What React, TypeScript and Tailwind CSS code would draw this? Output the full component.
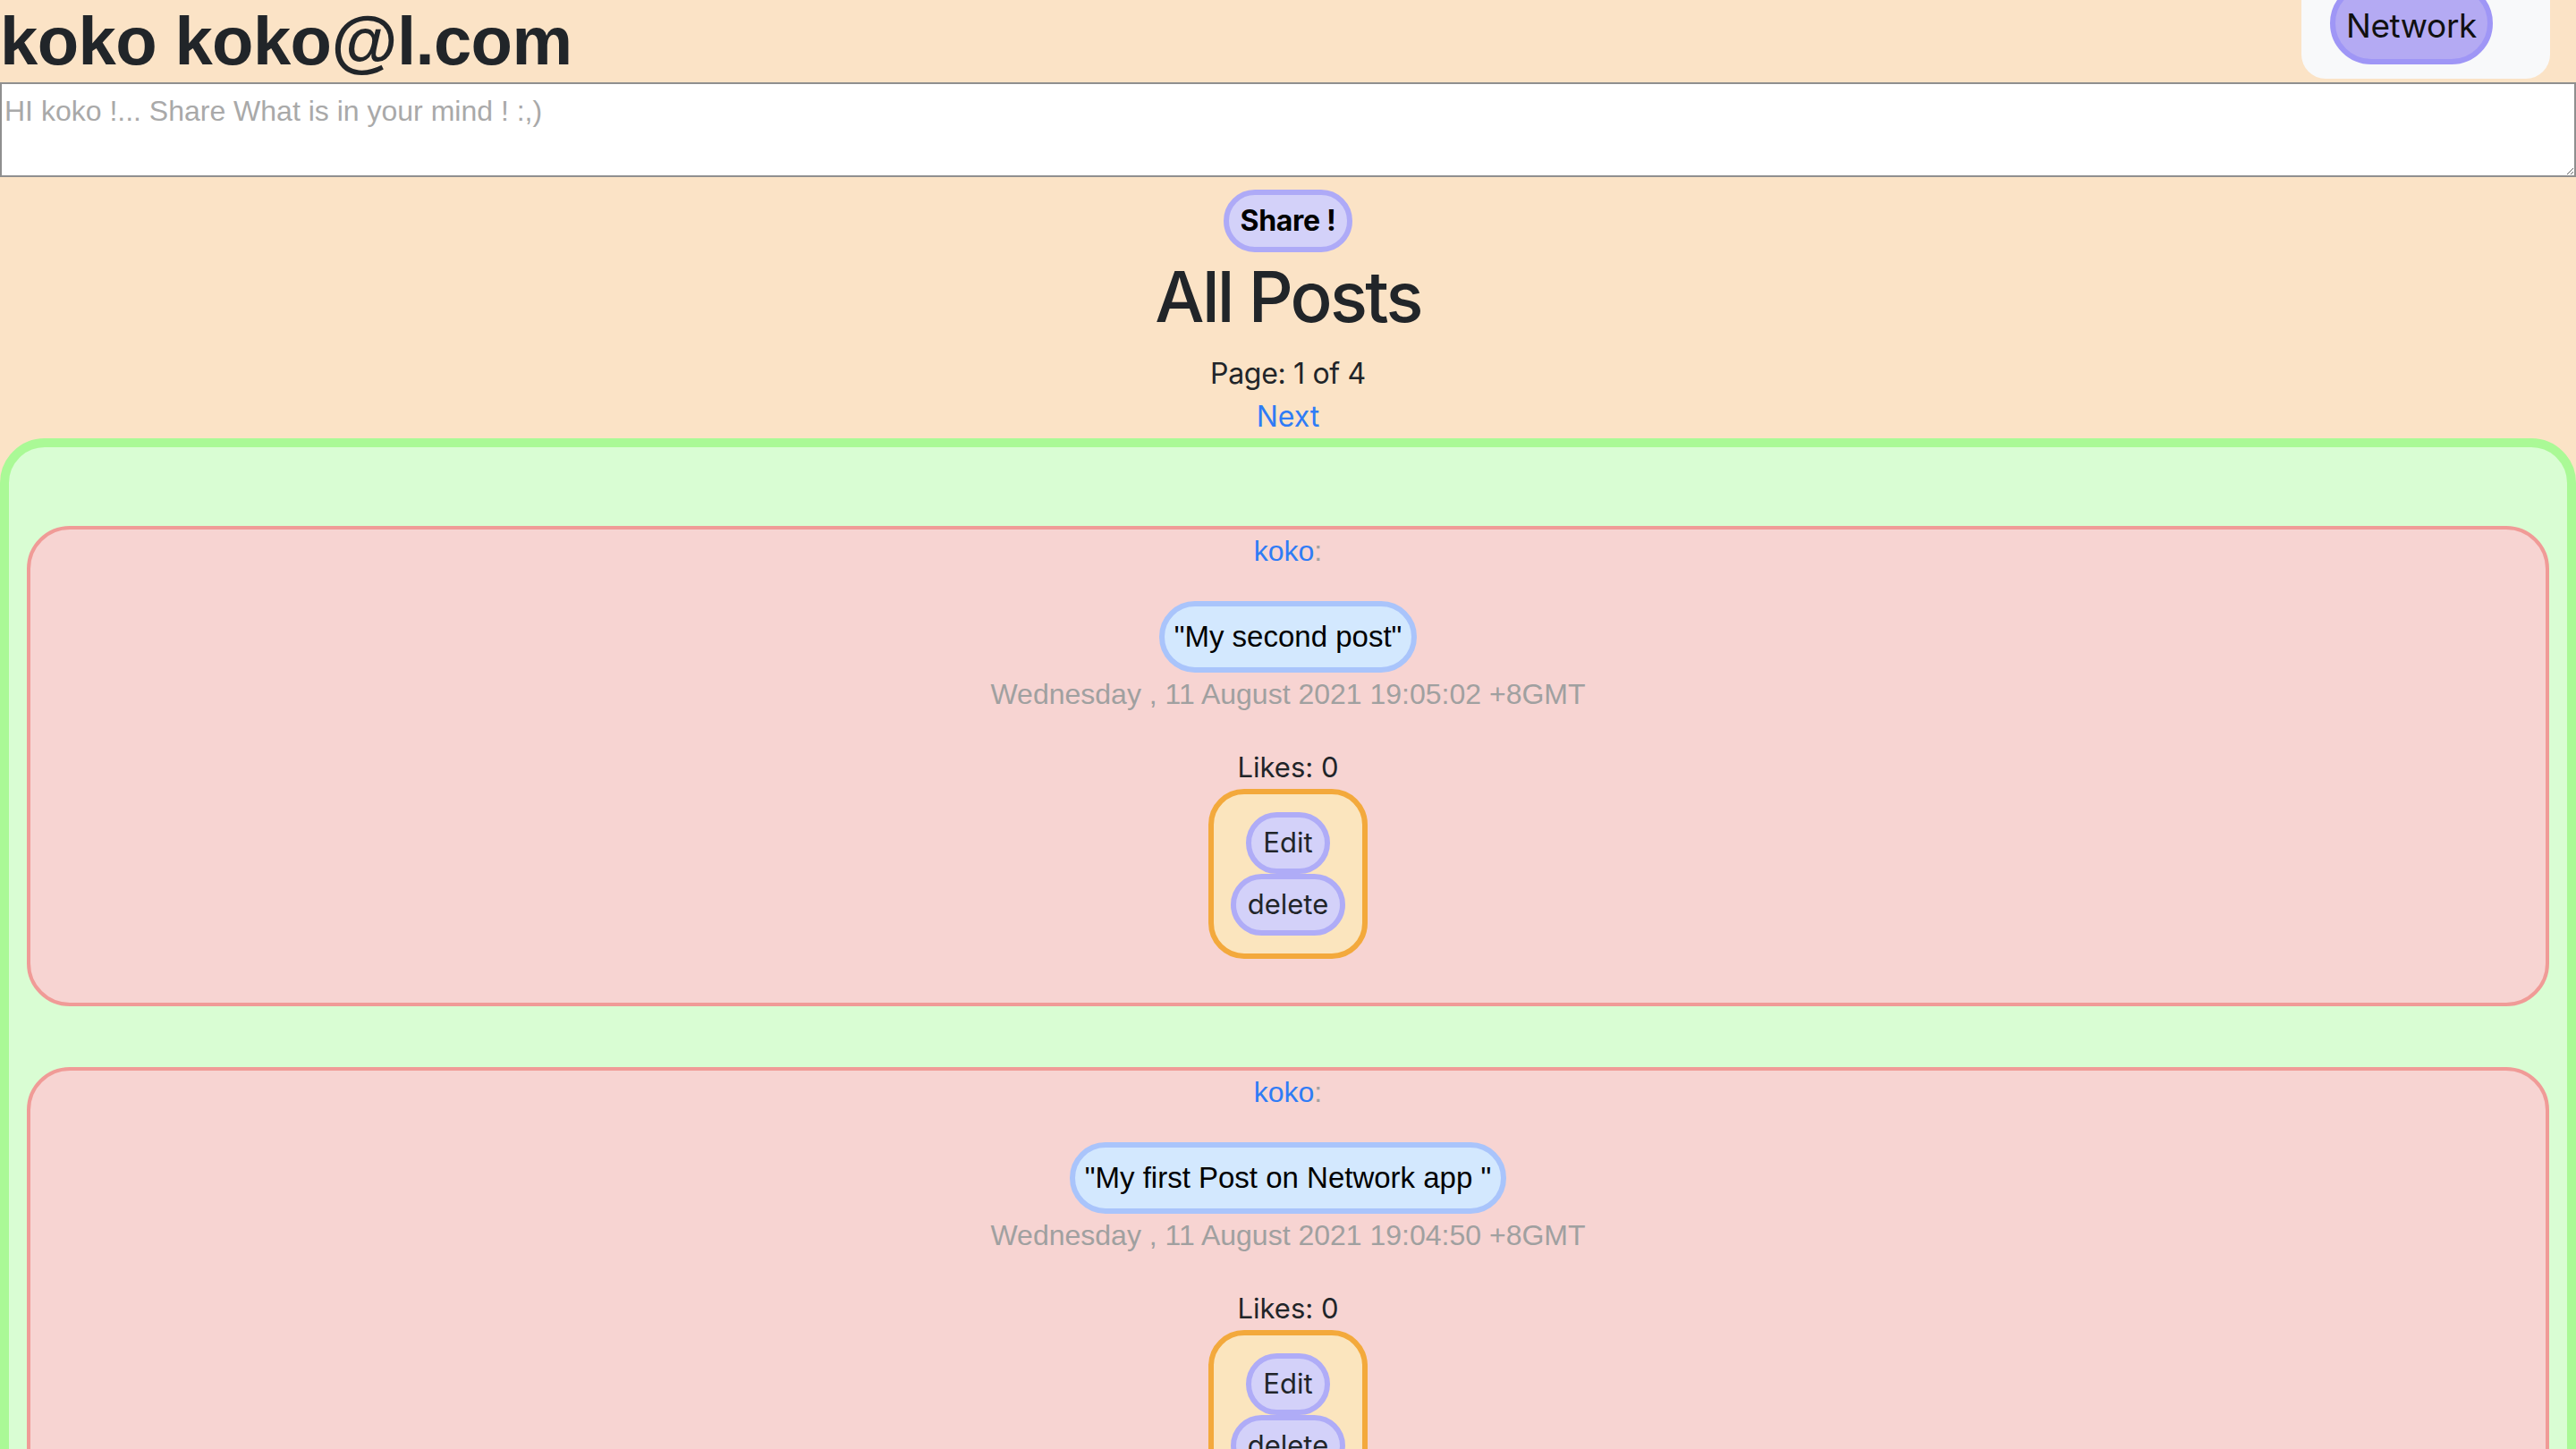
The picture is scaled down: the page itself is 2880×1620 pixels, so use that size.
const posts = [
  {
    id: 2,
    author: "koko",
    content: '"My second post"',
    date: "Wednesday , 11 August 2021 19:05:02 +8GMT",
    likes: 0,
  },
  {
    id: 1,
    author: "koko",
    content: '"My first Post on Network app "',
    date: "Wednesday , 11 August 2021 19:04:50 +8GMT",
    likes: 0,
  },
];

type Post = (typeof posts)[number];

const PostCard = ({ post }: { post: Post }) => {
  return (
    <div className="mx-[20px] flex flex-col items-center rounded-[48px] border-4 border-[#f09b97] bg-[#f7d4d2] pb-[49px] text-center">
      <div className="font-['Liberation_Sans',sans-serif] text-[32px] leading-[48px]">
        <a href="#" className="text-[#2f7cf6]">
          {post.author}
        </a>
        <span className="text-[#a0a0a0]">:</span>
      </div>

      <div className="mt-[32px] flex h-[80px] items-center rounded-full border-[6px] border-[#a9c4fb] bg-[#d3e8fe] px-[11px] font-['Liberation_Sans',sans-serif] text-[33px] text-black">
        {post.content}
      </div>

      <div className="font-['Liberation_Sans',sans-serif] text-[32px] leading-[48px] text-[#a0a0a0]">
        {post.date}
      </div>

      <div className="mt-[34px] text-[31px] leading-[48px]">Likes: {post.likes}</div>

      <div className="flex flex-col items-center rounded-[40px] border-[6px] border-[#f3a93c] bg-[#fbe5be] px-[19px] py-[20px]">
        <button className="flex h-[69px] items-center rounded-full border-[6px] border-[#afacf7] bg-[#d3d1f9] px-[13px] text-[31px] text-[#212529]">
          Edit
        </button>
        <button className="flex h-[69px] items-center rounded-full border-[6px] border-[#afacf7] bg-[#d3d1f9] px-[13px] text-[31px] text-[#212529]">
          delete
        </button>
      </div>
    </div>
  );
};

export default function App() {
  return (
    <div className="min-h-screen bg-[#fbe3c6] font-['Inter',sans-serif] text-[#212529]">
      <div className="flex h-[92px] items-start justify-between">
        <h1 className="pt-[2px] font-['Liberation_Sans',sans-serif] text-[76px] font-bold leading-[88px] tracking-[-0.008em]">
          koko koko@l.com
        </h1>
        <nav className="mr-[29px] flex h-[88px] items-start rounded-b-[27px] bg-[#f8f9fa] pl-[32px] pr-[64px]">
          <a
            href="#"
            className="-mt-[20px] flex h-[92px] items-center rounded-full border-[6px] border-[#9f96f6] bg-[#b4aaf3] px-[12px] pt-[6px] text-[37px] tracking-[-0.01em] text-[#111]"
          >
            Network
          </a>
        </nav>
      </div>

      <textarea
        className="block h-[106px] w-full border-2 border-[#8f8f8f] bg-white px-[3px] pt-[6px] font-['Liberation_Sans',sans-serif] text-[32px] placeholder:text-[#a9a9a9]"
        placeholder="HI koko !... Share What is in your mind ! :,)"
      />

      <div className="flex flex-col items-center">
        <button className="mt-[14px] flex h-[70px] items-center rounded-full border-[6px] border-[#aeaaf7] bg-[#d3d1f9] px-[13px] text-[32px] font-bold tracking-[-0.01em] text-black">
          Share !
        </button>
        <h2 className="mt-[2px] text-[78px] font-medium leading-[96px] tracking-[-0.035em]">All Posts</h2>
        <p className="mt-[14px] text-[32px] leading-[48px] tracking-[-0.01em]">Page: 1 of 4</p>
        <a href="#" className="text-[32px] leading-[48px] text-[#2f7cf6]">
          Next
        </a>
      </div>

      <div className="flex flex-col gap-[68px] rounded-[50px] border-[10px] border-[#aaf996] bg-[#d9fdd3] pb-[60px] pt-[88px]">
        {posts.map((post) => (
          <PostCard key={post.id} post={post} />
        ))}
      </div>
    </div>
  );
}
